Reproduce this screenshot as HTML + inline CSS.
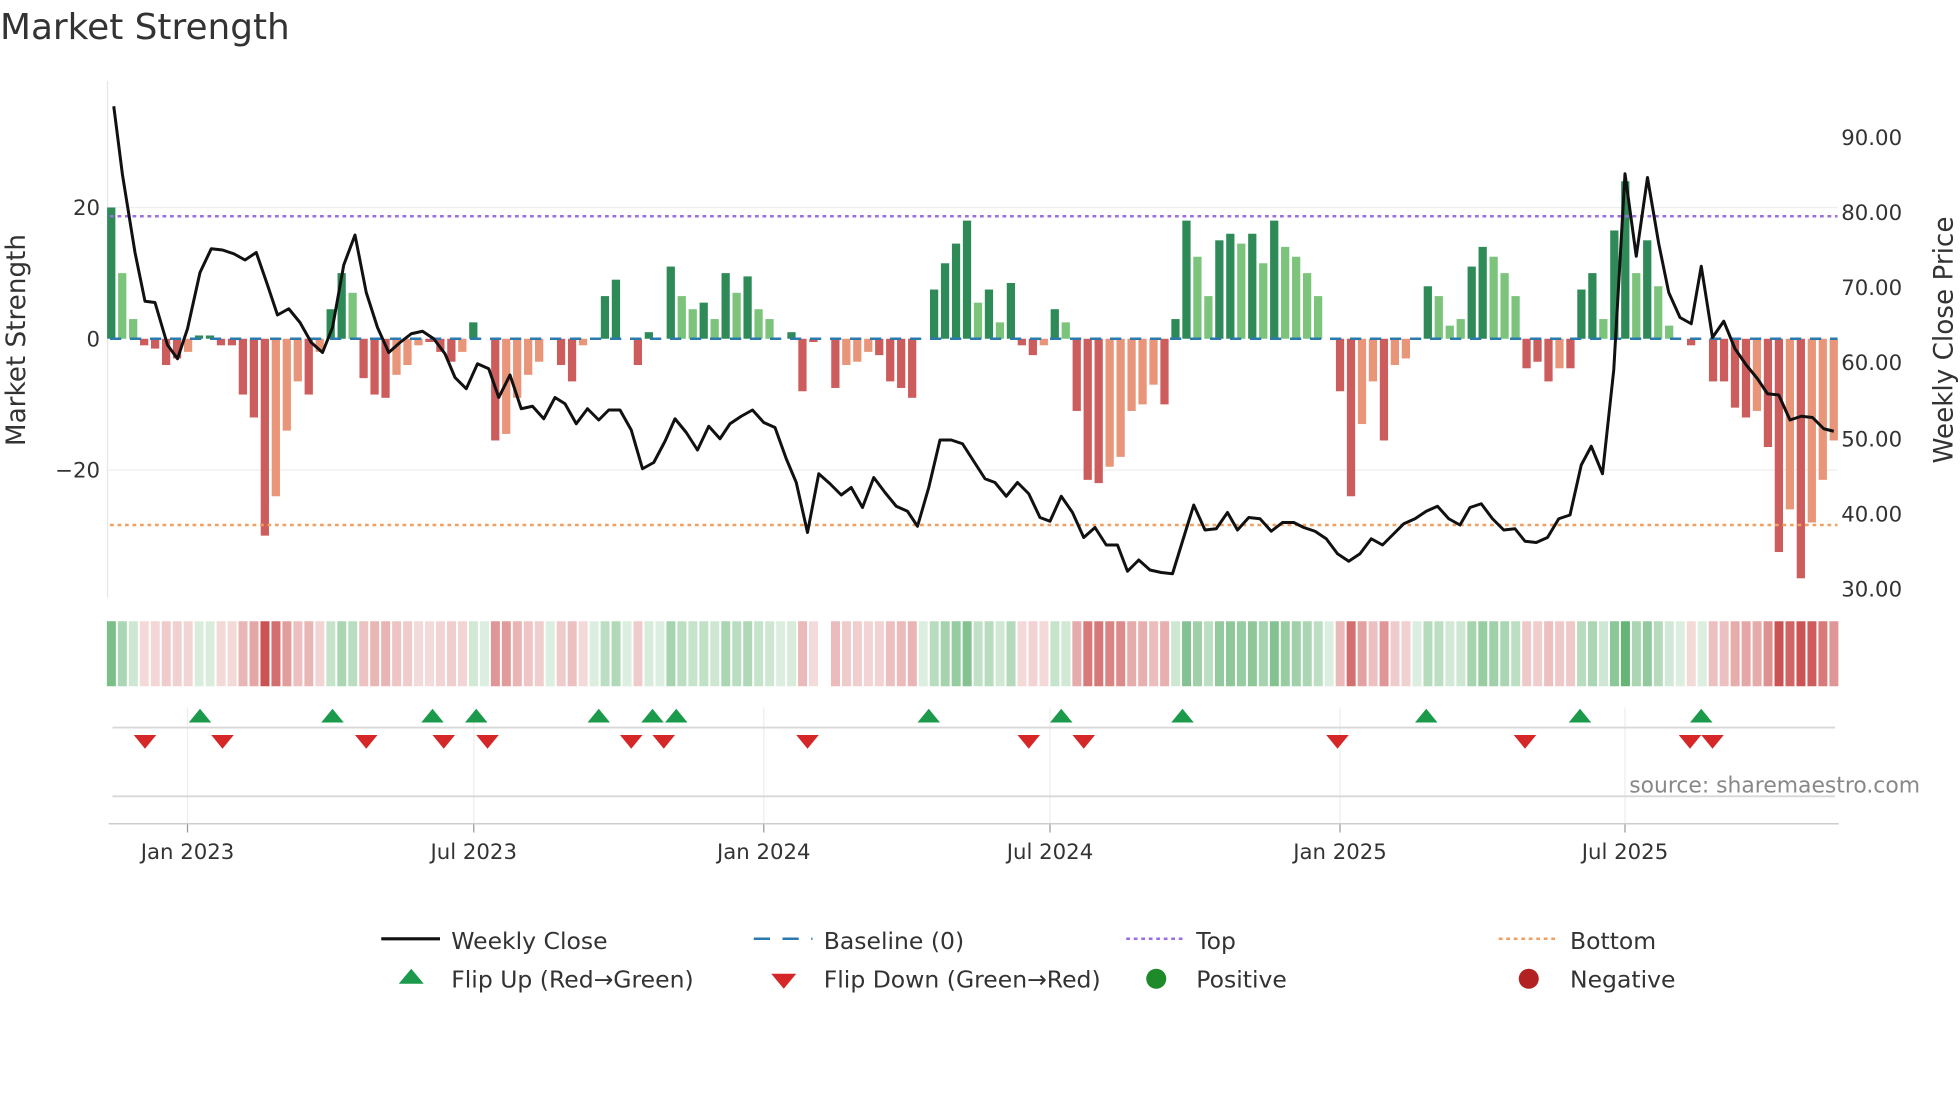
<!DOCTYPE html>
<html><head><meta charset="utf-8"><style>
html,body{margin:0;padding:0;background:#fff;width:1960px;height:1102px;overflow:hidden}
svg{display:block;font-family:"DejaVu Sans","Liberation Sans",sans-serif}
</style></head><body>
<svg id="s" width="1960" height="1102" viewBox="0 0 1568 881.6" xmlns="http://www.w3.org/2000/svg">
<text x="0" y="31" font-size="28.7" fill="#333">Market Strength</text>
<line x1="86" y1="65" x2="86" y2="478" stroke="#e6e6e6"/>
<line x1="86" y1="166" x2="1470" y2="166" stroke="#eeeeee"/>
<line x1="86" y1="376" x2="1470" y2="376" stroke="#eeeeee"/>
<g font-size="17" fill="#333">
<text x="80" y="172" text-anchor="end">20</text>
<text x="80" y="277" text-anchor="end">0</text>
<text x="80" y="382" text-anchor="end">−20</text>
<text x="1473" y="116">90.00</text><text x="1473" y="176">80.00</text><text x="1473" y="236">70.00</text>
<text x="1473" y="296">60.00</text><text x="1473" y="357">50.00</text><text x="1473" y="417">40.00</text><text x="1473" y="477">30.00</text>
</g>
<text transform="translate(20,272) rotate(-90)" font-size="21" fill="#333" text-anchor="middle">Market Strength</text>
<text transform="translate(1562,272) rotate(-90)" font-size="21" fill="#333" text-anchor="middle">Weekly Close Price</text>
<g id="bars"></g>
<line x1="88" y1="271" x2="1470" y2="271" stroke="#2a7ab0" stroke-width="2" stroke-dasharray="9,7"/>
<line x1="88" y1="173" x2="1470" y2="173" stroke="#9b6fe0" stroke-width="2" stroke-dasharray="3,3"/>
<line x1="88" y1="420" x2="1470" y2="420" stroke="#f0a060" stroke-width="2" stroke-dasharray="3,3"/>
<polyline id="price" fill="none" stroke="#111" stroke-width="2.4" stroke-linejoin="round"/>
<g id="heat"></g>
<g id="vgrid" stroke="#eeeeee"></g>
<line x1="90" y1="582" x2="1468" y2="582" stroke="#d8d8d8" stroke-width="1.5"/>
<line x1="90" y1="637" x2="1468" y2="637" stroke="#d8d8d8" stroke-width="1.5"/>
<line x1="87" y1="659" x2="1471" y2="659" stroke="#ccc" stroke-width="1.2"/>
<g id="tri"></g>
<text x="1536" y="634" font-size="17.5" fill="#888" text-anchor="end">source: sharemaestro.com</text>
<g font-size="17" fill="#333" text-anchor="middle">
<text x="150" y="687">Jan 2023</text><text x="379" y="687">Jul 2023</text><text x="611" y="687">Jan 2024</text>
<text x="840" y="687">Jul 2024</text><text x="1072" y="687">Jan 2025</text><text x="1300" y="687">Jul 2025</text>
</g>
<g font-size="18.8" fill="#333">
<line x1="305" y1="751" x2="352" y2="751" stroke="#111" stroke-width="2.5"/><text x="361" y="759">Weekly Close</text>
<line x1="603" y1="751" x2="650" y2="751" stroke="#2a7ab0" stroke-width="2" stroke-dasharray="13,10"/><text x="659" y="759">Baseline (0)</text>
<line x1="901" y1="751" x2="948" y2="751" stroke="#9b6fe0" stroke-width="2" stroke-dasharray="3,3"/><text x="957" y="759">Top</text>
<line x1="1199" y1="751" x2="1246" y2="751" stroke="#f0a060" stroke-width="2" stroke-dasharray="3,3"/><text x="1256" y="759">Bottom</text>
<polygon points="319,787 329,775 339,787" fill="#1a9a4a"/><text x="361" y="790">Flip Up (Red→Green)</text>
<polygon points="617,779 627,791 637,779" fill="#d62728"/><text x="659" y="790">Flip Down (Green→Red)</text>
<circle cx="925" cy="783" r="8" fill="#1f8a2a"/><text x="957" y="790">Positive</text>
<circle cx="1223" cy="783" r="8" fill="#b22222"/><text x="1256" y="790">Negative</text>
</g>
</svg>
<script>
var NS="http://www.w3.org/2000/svg";
function el(p,t,a){var e=document.createElementNS(NS,t);for(var k in a)e.setAttribute(k,a[k]);document.getElementById(p).appendChild(e);return e;}
var v="20d 10l 3l -1d -1.5d -4d -3d -2l 0.5d 0.5d -1d -1d -8.5d -12d -30d -24l -14l -6.5l -8.5d -2l 4.5d 10d 7l -6d -8.5d -9d -5.5l -4l -1l -0.5d -2d -3.5d -2l 2.5d 0d -15.5d -14.5l -9l -5.5l -3.5l 0d -4d -6.5d -1l 0d 6.5d 9d 0d -4d 1d 0d 11d 6.5l 4.5l 5.5d 3l 10d 7l 9.5d 4.5l 3l 0d 1d -8d -0.5d 0d -7.5d -4l -3.5l -2l -2.5d -6.5d -7.5d -9d 0d 7.5d 11.5d 14.5d 18d 5.5l 7.5d 2.5l 8.5d -1d -2.5d -1l 4.5d 2.5l -11d -21.5d -22d -19.5l -18l -11l -10l -7l -10d 3d 18d 12.5l 6.5l 15d 16d 14.5l 16d 11.5l 18d 14l 12.5l 10l 6.5l 0d -8d -24d -13l -6.5l -15.5d -4l -3l 0d 8d 6.5l 2l 3l 11d 14d 12.5l 10l 6.5l -4.5d -3.5d -6.5d -4.5l -4.5d 7.5d 10d 3l 16.5d 24d 10l 15d 8l 2l 0d -1d 0d -6.5d -6.5d -10.5d -12d -11l -16.5d -32.5d -26l -36.5d -28l -21.5l -15.5l".split(" ");
var n=v.length,step=(1467-89)/(n-1);
for(var i=0;i<n;i++){var s=v[i],val=parseFloat(s),d=s.slice(-1)=="d",x=89+step*i;
 if(val!=0){var h=Math.abs(val)*5.25,c=val>0?(d?"#2e8b57":"#7cc47c"):(d?"#cd5c5c":"#e8957a");
 el("bars","rect",{x:x-3.3,y:val>0?271-h:271,width:6.6,height:h,fill:c});}
 var a=Math.min(1,Math.abs(val)/30)*0.75+0.18,col=val>=0?"rgba(60,160,80,"+a+")":"rgba(200,70,70,"+a+")";
 if(Math.abs(x-660)>4) el("heat","rect",{x:x-3.5,y:497,width:7.2,height:52,fill:col});}
var p="91,85 98,140 108,202 116,241 124,242 134,276 142,287 150,263 160,218 169,199 178,200 187,203 196,208 205,202 214,228 222,252 231,247 240,258 249,274 258,282 266,262 275,212 284,188 293,234 302,262 311,282 320,274 329,267 338,265 347,271 356,283 364,302 373,311 382,291 391,295 399,318 408,300 417,327 426,325 435,335 444,318 452,323 461,339 470,327 479,336 487,328 496,328 505,344 514,375 523,370 532,353 540,335 549,346 558,360 567,341 576,351 584,339 593,333 602,328 611,338 620,342 629,367 637,386 646,426 655,379 664,387 673,396 681,390 690,406 699,382 708,394 717,405 726,409 734,421 743,390 752,352 761,352 770,355 779,369 788,383 796,386 805,397 814,386 823,395 832,414 840,417 849,397 858,410 867,430 876,422 885,436 894,436 902,457 911,448 920,456 929,458 938,459 946,433 955,404 964,424 973,423 982,410 990,424 999,414 1008,415 1017,425 1026,418 1035,418 1043,422 1052,425 1061,431 1070,443 1079,449 1088,443 1097,431 1106,436 1114,428 1123,419 1132,415 1141,409 1150,405 1159,415 1168,420 1176,406 1185,403 1194,415 1203,424 1212,423 1220,433 1229,434 1238,430 1247,415 1256,412 1265,372 1273,357 1282,379 1291,296 1300,139 1309,205 1318,142 1327,195 1335,234 1344,254 1353,259 1361,213 1370,270 1379,257 1388,279 1397,292 1406,303 1414,315 1423,316 1432,336 1441,333 1450,334 1459,343 1467,345";
document.getElementById("price").setAttribute("points",p);
[150,379,611,840,1072,1300].forEach(function(x){el("vgrid","line",{x1:x,y1:566,x2:x,y2:659});el("vgrid","line",{x1:x,y1:659,x2:x,y2:666,stroke:"#999"});});
[160,266,346,381,479,522,541,743,849,946,1141,1264,1361].forEach(function(x){el("tri","polygon",{points:(x-9)+",578 "+x+",567 "+(x+9)+",578",fill:"#1a9a4a"});});
[116,178,293,355,390,505,531,646,823,867,1070,1220,1352,1370].forEach(function(x){el("tri","polygon",{points:(x-9)+",588 "+x+",599 "+(x+9)+",588",fill:"#d62728"});});
</script>
</body></html>
